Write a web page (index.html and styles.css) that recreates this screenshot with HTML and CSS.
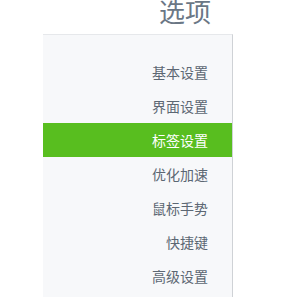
FILE: index.html
```html
<!DOCTYPE html>
<html lang="zh-CN">
<head>
    <meta charset="UTF-8">
    <title>选项</title>
    <link rel="stylesheet" href="styles.css">
</head>
<body>
    <div class="wrap">
        <h1 class="title">选项</h1>
        <ul class="side-menu">
            <li><a href="#basic">基本设置</a></li>
            <li><a href="#ui">界面设置</a></li>
            <li class="active"><a href="#tabs">标签设置</a></li>
            <li><a href="#speed">优化加速</a></li>
            <li><a href="#gesture">鼠标手势</a></li>
            <li><a href="#keys">快捷键</a></li>
            <li><a href="#advanced">高级设置</a></li>
        </ul>
    </div>
</body>
</html>
```

FILE: styles.css
```css
/* ======= General ======= */
body {
    margin: 0;
    padding: 0 0 0 43px;
    background: #fff;
    font-family: "Noto Sans CJK SC", "Noto Sans", sans-serif;
    color: #5c6773;
}

.wrap {
    width: 190px;
}

/* ======= Title ======= */
.title {
    margin: 0;
    height: 34px;
    line-height: 22px;
    padding-right: 22px;
    text-align: right;
    font-size: 26px;
    font-weight: normal;
    color: #6b7785;
}

/* ======= Side Menu ======= */
.side-menu {
    list-style: none;
    margin: 0;
    padding: 20px 0 40px;
    background: #f7f8fa;
    border-top: 1px solid #e6e8eb;
    border-right: 1px solid #cfd2d6;
}

.side-menu a {
    display: block;
    height: 34px;
    line-height: 34px;
    padding-right: 24px;
    text-align: right;
    font-size: 14px;
    color: #5c6773;
    text-decoration: none;
}

.side-menu li.active a {
    background: #58be1f;
    color: #fff;
}
```
